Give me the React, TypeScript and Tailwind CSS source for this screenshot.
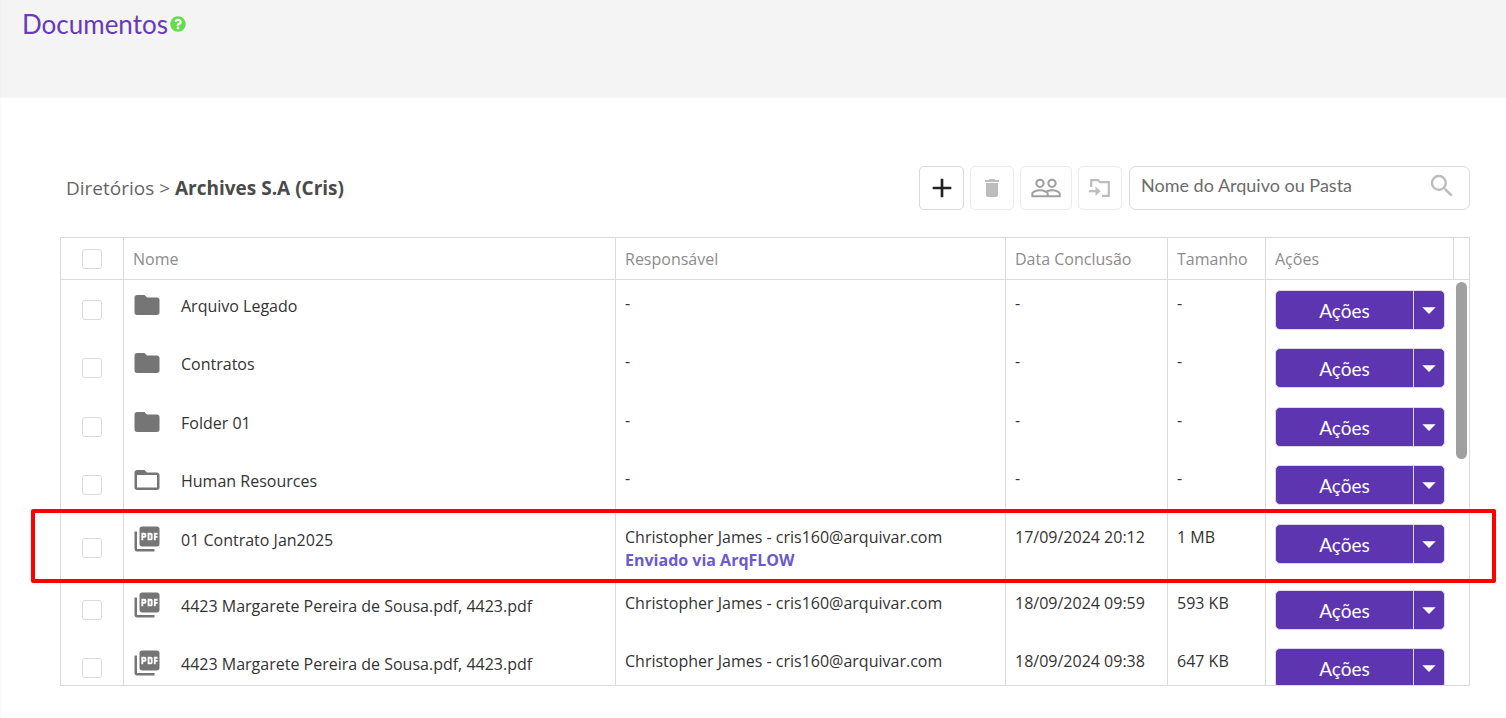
import { FaQuestionCircle } from "react-icons/fa";
import {
  MdAdd,
  MdArrowDropDown,
  MdDelete,
  MdFolder,
  MdFolderOpen,
  MdPeopleOutline,
  MdPictureAsPdf,
  MdSearch,
} from "react-icons/md";

type Kind = "folder" | "open" | "pdf";

interface Item {
  kind: Kind;
  name: string;
  owner: string;
  note?: string;
  date: string;
  size: string;
}

const OWNER = "Christopher James - cris160@arquivar.com";

const ITEMS: Item[] = [
  { kind: "folder", name: "Arquivo Legado", owner: "-", date: "-", size: "-" },
  { kind: "folder", name: "Contratos", owner: "-", date: "-", size: "-" },
  { kind: "folder", name: "Folder 01", owner: "-", date: "-", size: "-" },
  { kind: "open", name: "Human Resources", owner: "-", date: "-", size: "-" },
  { kind: "pdf", name: "01 Contrato Jan2025", owner: OWNER, note: "Enviado via ArqFLOW", date: "17/09/2024 20:12", size: "1 MB" },
  { kind: "pdf", name: "4423 Margarete Pereira de Sousa.pdf, 4423.pdf", owner: OWNER, date: "18/09/2024 09:59", size: "593 KB" },
  { kind: "pdf", name: "4423 Margarete Pereira de Sousa.pdf, 4423.pdf", owner: OWNER, date: "18/09/2024 09:38", size: "647 KB" },
];

function KindIcon({ kind }: { kind: Kind }) {
  const Icon = kind === "folder" ? MdFolder : kind === "open" ? MdFolderOpen : MdPictureAsPdf;
  return <Icon className="size-[30px] shrink-0 text-[#757575]" aria-hidden="true" />;
}

function MoveIcon() {
  return (
    <svg viewBox="0 0 22 20" className="h-5 w-[22px]" fill="none" stroke="currentColor" strokeWidth="2.2" aria-hidden="true">
      <path d="M2.2 9V2.2H9L11 4.2H19.8V17.8H13" />
      <path d="M0 13.2H8" />
      <path d="M6.5 8.4L11.6 13.2L6.5 18Z" fill="currentColor" stroke="none" />
    </svg>
  );
}

function Check({ label }: { label: string }) {
  return (
    <input
      type="checkbox"
      aria-label={label}
      className="mx-auto block size-5 appearance-none rounded-[3px] border border-[#dadada] bg-white checked:bg-[#5e35b1]"
    />
  );
}

function ActionButton() {
  return (
    <div className="flex h-10 w-[170px] overflow-hidden rounded-[5px] border border-[#dcd6ea] bg-[#5e35b1] font-['Lato',sans-serif] text-[19px] text-white">
      <button type="button" className="flex-1">Ações</button>
      <button type="button" aria-label="Mais ações" className="flex w-[31px] items-center justify-center border-l border-[#dcd6ea]">
        <MdArrowDropDown className="size-8 shrink-0" aria-hidden="true" />
      </button>
    </div>
  );
}

const TOOL = "flex h-11 items-center justify-center rounded-[5px] border bg-white";
const HEAD = "border-b border-l border-[#dadada] px-[9px] pt-[2px] text-left font-normal";
const CELL = "border-l border-[#dadada] px-[9px] pt-3 align-top whitespace-nowrap";

export default function App() {
  return (
    <div className="min-h-screen bg-white font-['Open_Sans',sans-serif] text-[#333]">
      <header className="flex h-[98px] items-start gap-[2px] border-l-2 border-[#f1f1f1] bg-[#f4f4f4] pt-1 pl-5">
        <h1 className="font-['Lato',sans-serif] text-[26px] leading-10 text-[#673ab7]">Documentos</h1>
        <a href="#ajuda" aria-label="Ajuda" className="mt-3 text-[#65dc4c]">
          <FaQuestionCircle className="size-4" />
        </a>
      </header>

      <main className="border-l-2 border-[#fcfcfc] pt-[67px] pr-9 pb-8 pl-[58px]">
        <div className="flex h-[45px] items-center justify-between">
          <nav aria-label="Diretórios" className="pt-[2px] pl-[6px] text-[19px] text-[#666]">
            <a href="#diretorios">Diretórios</a> &gt; <strong className="text-[#4a4a4a]">Archives S.A (Cris)</strong>
          </nav>
          <div className="flex items-center gap-[6px]">
            <button type="button" aria-label="Adicionar" className={TOOL + " w-[45px] border-[#dadada] text-[#222]"}>
              <MdAdd className="size-8" />
            </button>
            <button type="button" aria-label="Excluir" className={TOOL + " w-11 border-[#ececec] text-[#bdbdbd]"}>
              <MdDelete className="size-6" />
            </button>
            <button type="button" aria-label="Compartilhar" className={TOOL + " w-[52px] border-[#ececec] text-[#a0a0a0]"}>
              <MdPeopleOutline className="size-8" />
            </button>
            <button type="button" aria-label="Mover" className={TOOL + " w-11 border-[#ececec] text-[#bdbdbd]"}>
              <MoveIcon />
            </button>
            <label className="ml-px flex h-11 w-[341px] items-center rounded-[7px] border border-[#dadada] pr-3 pb-1 pl-[11px]">
              <input
                type="text"
                aria-label="Nome do Arquivo ou Pasta"
                placeholder="Nome do Arquivo ou Pasta"
                className="min-w-0 flex-1 font-['Lato',sans-serif] text-[18px] outline-none placeholder:text-[#6c6c6c]"
              />
              <MdSearch className="size-[30px] text-[#bdbdbd]" aria-hidden="true" />
            </label>
          </div>
        </div>

        <div className="relative mt-[27px]">
          <div className="h-[449px] overflow-hidden border border-[#dadada]">
            <table className="w-full table-fixed border-separate border-spacing-0 text-[16px] leading-[23px]">
              <colgroup>
                <col className="w-[62px]" />
                <col />
                <col className="w-[390px]" />
                <col className="w-[162px]" />
                <col className="w-[98px]" />
                <col className="w-[188px]" />
                <col className="w-4" />
              </colgroup>
              <thead>
                <tr className="h-[42px] text-[#8c8c8c]">
                  <th scope="col" className="border-b border-[#dadada]"><Check label="Selecionar tudo" /></th>
                  <th scope="col" className={HEAD}>Nome</th>
                  <th scope="col" className={HEAD}>Responsável</th>
                  <th scope="col" className={HEAD}>Data Conclusão</th>
                  <th scope="col" className={HEAD}>Tamanho</th>
                  <th scope="col" className={HEAD}>Ações</th>
                  <td className="border-b border-l border-[#dadada]" />
                </tr>
              </thead>
              <tbody>
                {ITEMS.map((item, i) => (
                  <tr key={i} className={item.note ? "h-[66px]" : "h-[58px] nth-2:h-[59px] nth-4:h-[59px]"}>
                    <td className="pt-px align-middle"><Check label={"Selecionar " + item.name} /></td>
                    <td className="border-l border-[#dadada] pt-[10px] pl-2 align-top whitespace-nowrap">
                      <div className="flex items-center gap-[19px]">
                        <KindIcon kind={item.kind} />
                        <span className="pt-[2px]">{item.name}</span>
                      </div>
                    </td>
                    <td className={CELL}>
                      {item.owner}
                      {item.note && <div className="font-bold text-[#6a5acd]">{item.note}</div>}
                    </td>
                    <td className={CELL}>{item.date}</td>
                    <td className={CELL}>{item.size}</td>
                    <td className="border-l border-[#dadada] pt-[10px] pl-[9px] align-top"><ActionButton /></td>
                    <td />
                  </tr>
                ))}
              </tbody>
            </table>
          </div>
          <div className="absolute top-[45px] right-[3px] h-[177px] w-[11px] rounded-full bg-[#a0a0a0]" />
          <div className="pointer-events-none absolute top-[272px] -right-[26px] -left-[29px] h-[74px] rounded-[2px] border-4 border-[#ff0000]" />
        </div>
      </main>
    </div>
  );
}
